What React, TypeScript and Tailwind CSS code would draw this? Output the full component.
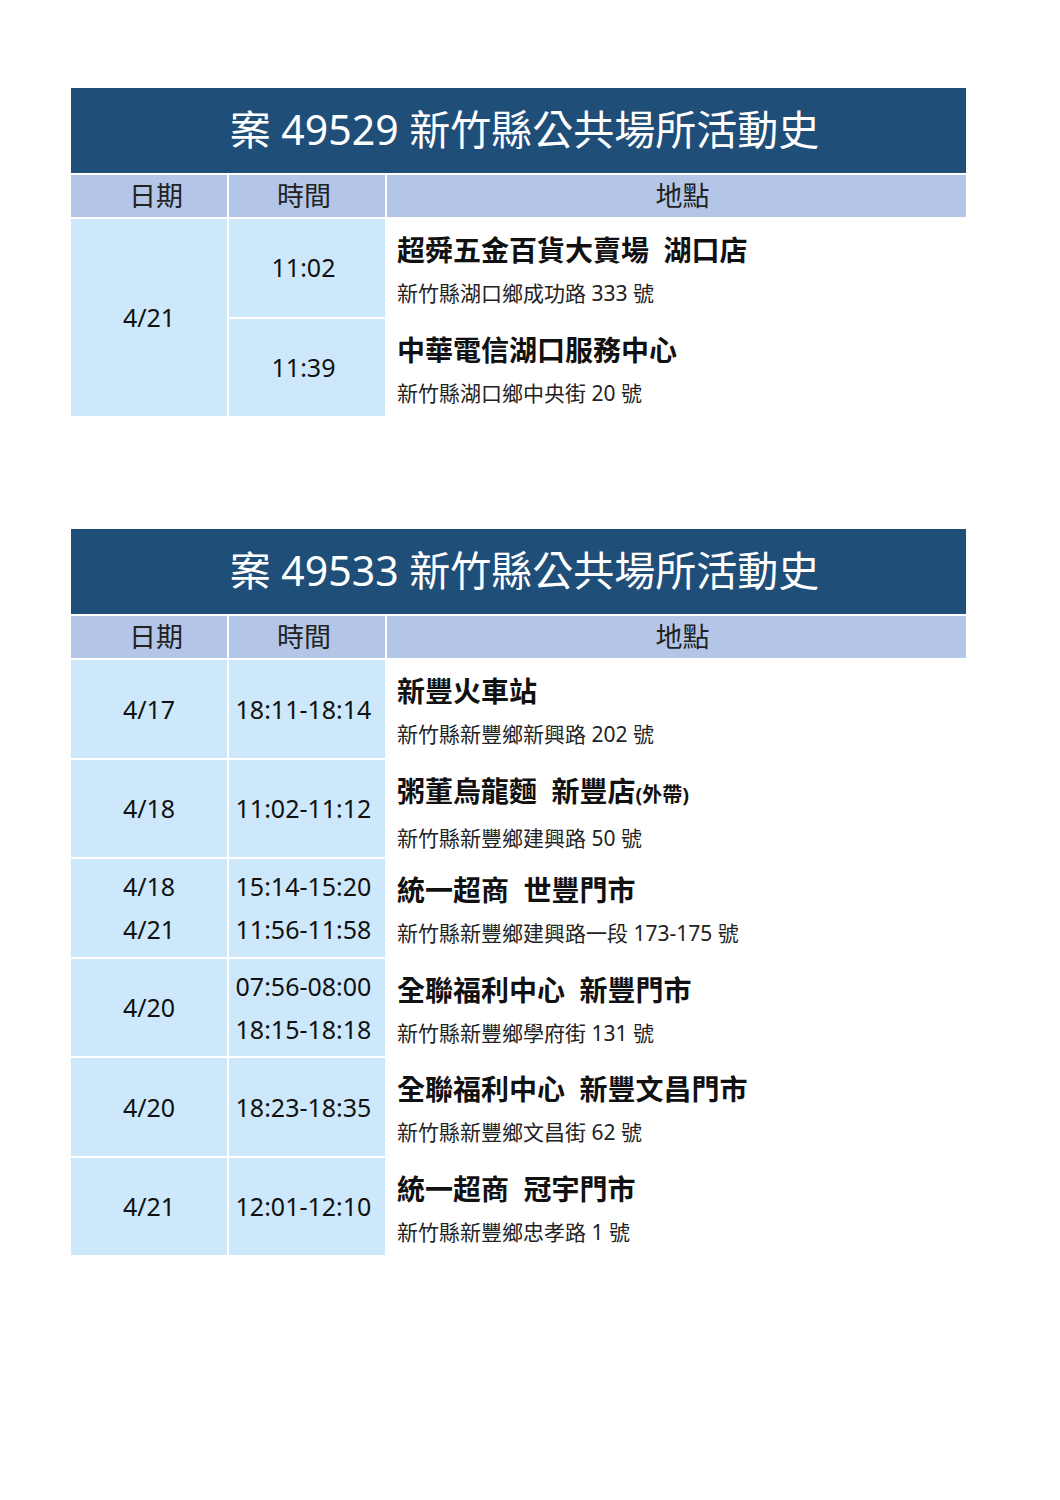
import { FC, ReactNode } from "react";

interface Place {
  name: ReactNode;
  address: string;
}

interface Visit {
  dates: string[];
  times: string[];
  place: Place;
}

const FONT = {
  fontFamily: '"Noto Sans", "Noto Sans CJK TC", sans-serif',
};

const Title: FC<{ caseNo: string }> = ({ caseNo }) => (
  <div className="h-[85px] bg-[#1f4e79] flex items-center justify-center text-white text-[41px] leading-none pb-[2px] pl-[12px]">
    案 {caseNo} 新竹縣公共場所活動史
  </div>
);

const Header: FC = () => (
  <div className="grid grid-cols-[156px_156px_1fr] gap-[2px] h-[42px] text-[27px] text-[#222]">
    <div className="bg-[#b4c6e7] flex items-center justify-center pl-[14px]">日期</div>
    <div className="bg-[#b4c6e7] flex items-center justify-center pr-[6px]">時間</div>
    <div className="bg-[#b4c6e7] flex items-center justify-center pl-[12px]">地點</div>
  </div>
);

const PlaceCell: FC<{ place: Place }> = ({ place }) => (
  <div className="bg-white pl-[10px] pt-[13px]">
    <div className="text-[28px] font-bold leading-[36px] text-[#111] whitespace-pre">
      {place.name}
    </div>
    <div className="mt-[10px] text-[21px] leading-[30px] text-[#222]">
      {place.address}
    </div>
  </div>
);

const Stack: FC<{ items: string[]; shift?: boolean }> = ({ items, shift }) => (
  <div
    className={
      "bg-[#cde8fb] flex flex-col items-center justify-center gap-[11px] text-[25px] leading-[32px] text-[#111] " +
      (shift ? "pr-[7px]" : "")
    }
  >
    {items.map((t) => (
      <div key={t}>{t}</div>
    ))}
  </div>
);

const firstPlaces: { time: string; place: Place }[] = [
  {
    time: "11:02",
    place: { name: "超舜五金百貨大賣場  湖口店", address: "新竹縣湖口鄉成功路 333 號" },
  },
  {
    time: "11:39",
    place: { name: "中華電信湖口服務中心", address: "新竹縣湖口鄉中央街 20 號" },
  },
];

const secondVisits: Visit[] = [
  {
    dates: ["4/17"],
    times: ["18:11-18:14"],
    place: { name: "新豐火車站", address: "新竹縣新豐鄉新興路 202 號" },
  },
  {
    dates: ["4/18"],
    times: ["11:02-11:12"],
    place: {
      name: (
        <>
          粥董烏龍麵  新豐店<span className="text-[20px]">(外帶)</span>
        </>
      ),
      address: "新竹縣新豐鄉建興路 50 號",
    },
  },
  {
    dates: ["4/18", "4/21"],
    times: ["15:14-15:20", "11:56-11:58"],
    place: { name: "統一超商  世豐門市", address: "新竹縣新豐鄉建興路一段 173-175 號" },
  },
  {
    dates: ["4/20"],
    times: ["07:56-08:00", "18:15-18:18"],
    place: { name: "全聯福利中心  新豐門市", address: "新竹縣新豐鄉學府街 131 號" },
  },
  {
    dates: ["4/20"],
    times: ["18:23-18:35"],
    place: { name: "全聯福利中心  新豐文昌門市", address: "新竹縣新豐鄉文昌街 62 號" },
  },
  {
    dates: ["4/21"],
    times: ["12:01-12:10"],
    place: { name: "統一超商  冠宇門市", address: "新竹縣新豐鄉忠孝路 1 號" },
  },
];

export default function App() {
  return (
    <div className="w-[1060px] min-h-[1500px] bg-white pt-[88px] pl-[71px]" style={FONT}>
      {/* Case 49529 */}
      <div className="w-[895px] flex flex-col gap-[2px]">
        <Title caseNo="49529" />
        <Header />
        <div className="grid grid-cols-[156px_156px_1fr] grid-rows-[97.5px_97.5px] gap-[2px]">
          <div className="row-span-2 bg-[#cde8fb] flex items-center justify-center text-[25px] text-[#111]">
            4/21
          </div>
          {firstPlaces.map((p, i) => (
            <div key={p.time} className="contents">
              <div
                className={
                  "bg-[#cde8fb] flex items-center justify-center text-[25px] text-[#111] col-start-2 pr-[7px] " +
                  (i === 0 ? "row-start-1" : "row-start-2")
                }
              >
                {p.time}
              </div>
              <div className={"col-start-3 " + (i === 0 ? "row-start-1" : "row-start-2") + " flex"}>
                <div className="flex-1">
                  <PlaceCell place={p.place} />
                </div>
              </div>
            </div>
          ))}
        </div>
      </div>

      {/* Case 49533 */}
      <div className="w-[895px] flex flex-col gap-[2px] mt-[113px]">
        <Title caseNo="49533" />
        <Header />
        <div className="grid grid-cols-[156px_156px_1fr] auto-rows-[97.5px] gap-[2px]">
          {secondVisits.map((v, i) => (
            <div key={i} className="contents">
              <Stack items={v.dates} />
              <Stack items={v.times} shift />
              <PlaceCell place={v.place} />
            </div>
          ))}
        </div>
      </div>
    </div>
  );
}
